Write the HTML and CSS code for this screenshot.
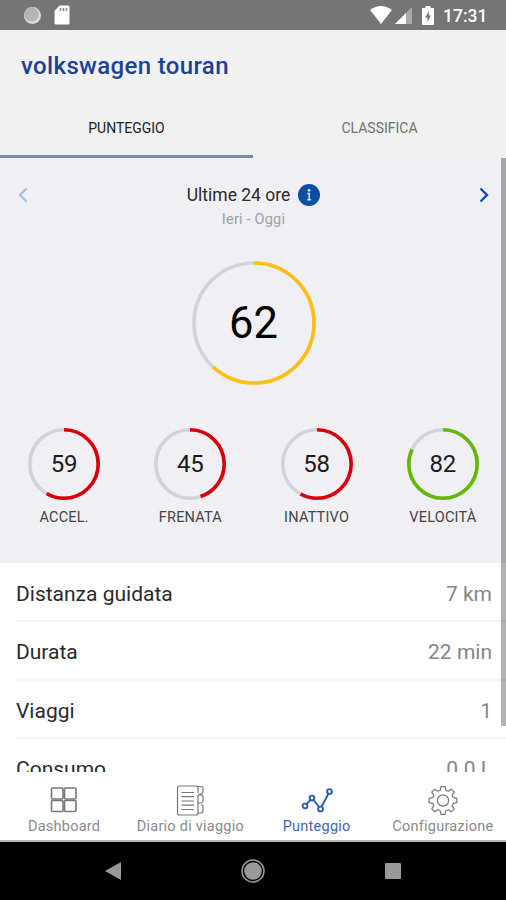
FILE: index.html
```
<!DOCTYPE html>
<html lang="it">
<head>
  <meta charset="UTF-8" />
  <meta name="viewport" content="width=device-width, initial-scale=1.0"/>
  <title>Punteggio</title>
  <link rel="stylesheet" href="styles.css">
</head>
<body>
  <div class="status-bar">
    <div class="status-left">
      <svg width="20" height="20" viewBox="0 0 20 20"><circle cx="10.500" cy="10.500" r="8.500" fill="#dcdcdc"/><circle cx="9.500" cy="9.300" r="7.200" fill="#b5b5b5"/></svg>
      <svg width="16" height="20" viewBox="0 0 16 20"><path d="M5.500 .5H14Q15.500 .5 15.500 2V18Q15.500 19.500 14 19.500H2Q.5 19.500 .5 18V6Z" fill="#fff"/><path d="M6.500 3v3M9.500 3v3M12.500 3v3" stroke="#888" stroke-width="1.500"/></svg>
    </div>
    <div class="status-right">
      <svg class="wifi" width="22" height="18" viewBox="0 0 22 18"><path d="M0 4Q11-4 22 4L11 18Z" fill="#fff"/></svg>
      <svg class="signal" width="17" height="17" viewBox="0 0 17 17"><path d="M17 0V17H0Z" fill="#a9a9a9"/><path d="M11 6V17H0Z" fill="#fff"/></svg>
      <svg class="battery" width="12" height="19" viewBox="0 0 12 19"><path d="M3.500 0H8.500V2H11Q12 2 12 3V18Q12 19 11 19H1Q0 19 0 18V3Q0 2 1 2H3.500Z" fill="#fff"/><path d="M7 5L3 11.500H5.500V16L9 9.500H6.800Z" fill="#757575"/></svg>
      <span class="clock">17:31</span>
    </div>
  </div>

  <header>
    <h1>volkswagen touran</h1>
    <nav class="tabs">
      <a class="tab active">PUNTEGGIO</a>
      <a class="tab">CLASSIFICA</a>
    </nav>
  </header>

  <main>
    <section class="score">
      <div class="period">
        <svg class="prev" width="10" height="16" viewBox="0 0 10 16"><path d="M8.500 1.500L2 8L8.500 14.500"/></svg>
        <div class="period-text">
          <div class="period-title">
            <span>Ultime 24 ore</span>
            <svg width="22" height="22" viewBox="0 0 22 22"><circle cx="11" cy="11" r="11" fill="#0b4ea2"/><circle cx="11" cy="6.300" r="1.400" fill="#dbe6f5"/><path d="M9.300 9.500H11.200V15.500M9.200 15.700H13" fill="none" stroke="#dbe6f5" stroke-width="1.500"/></svg>
          </div>
          <p>Ieri - Oggi</p>
        </div>
        <svg class="next" width="10" height="16" viewBox="0 0 10 16"><path d="M1.500 1.500L8 8L1.500 14.500"/></svg>
      </div>

      <div class="gauge big yellow">
        <svg viewBox="0 0 124 124"><circle class="track" cx="62" cy="62" r="60"/><circle class="value" cx="62" cy="62" r="60" pathLength="100" stroke-dasharray="62 100"/></svg>
        <span>62</span>
      </div>

      <div class="gauges">
        <div class="item">
          <div class="gauge red">
            <svg viewBox="0 0 72 72"><circle class="track" cx="36" cy="36" r="34.200"/><circle class="value" cx="36" cy="36" r="34.200" pathLength="100" stroke-dasharray="58.500 100"/></svg>
            <span>59</span>
          </div>
          <p>ACCEL.</p>
        </div>
        <div class="item">
          <div class="gauge red">
            <svg viewBox="0 0 72 72"><circle class="track" cx="36" cy="36" r="34.200"/><circle class="value" cx="36" cy="36" r="34.200" pathLength="100" stroke-dasharray="45 100"/></svg>
            <span>45</span>
          </div>
          <p>FRENATA</p>
        </div>
        <div class="item">
          <div class="gauge red">
            <svg viewBox="0 0 72 72"><circle class="track" cx="36" cy="36" r="34.200"/><circle class="value" cx="36" cy="36" r="34.200" pathLength="100" stroke-dasharray="58 100"/></svg>
            <span>58</span>
          </div>
          <p>INATTIVO</p>
        </div>
        <div class="item">
          <div class="gauge green">
            <svg viewBox="0 0 72 72"><circle class="track" cx="36" cy="36" r="34.200"/><circle class="value" cx="36" cy="36" r="34.200" pathLength="100" stroke-dasharray="82 100"/></svg>
            <span>82</span>
          </div>
          <p>VELOCITÀ</p>
        </div>
      </div>
    </section>

    <ul class="stats">
      <li><span>Distanza guidata</span><b>7 km</b></li>
      <li><span>Durata</span><b>22 min</b></li>
      <li><span>Viaggi</span><b>1</b></li>
      <li><span>Consumo</span><b>0.0 L</b></li>
    </ul>
    <div class="scrollbar"></div>
  </main>

  <nav class="bottom-nav">
    <a>
      <svg width="32" height="32" viewBox="0 0 32 32"><rect x="3.500" y="4" width="11.500" height="11" rx="1"/><rect x="16.500" y="4" width="11.500" height="11" rx="1"/><rect x="3.500" y="16.500" width="11.500" height="11" rx="1"/><rect x="16.500" y="16.500" width="11.500" height="11" rx="1"/></svg>
      <span>Dashboard</span>
    </a>
    <a>
      <svg class="thin" width="32" height="32" viewBox="0 0 32 32"><path d="M24 9V4Q24 2 22 2H5Q3.500 2 3.500 3.500V29Q3.500 31 5.500 31H22Q24 31 24 29V12Q24 10 26 10H28L29 8V4.500Q29 2.500 27 2.500H22M24 11H27Q29 11 29 13V17L27.500 19H24M27.500 20.500L29 22V27Q29 29 27 29H24M7.500 8.500H20M7.500 12.700H20M7.500 17H20M7.500 21.200H20M7.500 25.500H20"/></svg>
      <span>Diario di viaggio</span>
    </a>
    <a class="active">
      <svg width="32" height="32" viewBox="0 0 32 32"><circle cx="4" cy="22" r="2.400"/><circle cx="11" cy="14" r="2.400"/><circle cx="19.500" cy="25" r="2.400"/><circle cx="28.500" cy="7.500" r="2.400"/><path d="M5.600 20.200L9.400 15.800M12.500 16L18 23M20.600 22.800L27.400 9.700"/></svg>
      <span>Punteggio</span>
    </a>
    <a>
      <svg class="thin" width="32" height="32" viewBox="0 0 32 32"><circle cx="16" cy="16.500" r="5.600"/><path d="M13.900 2.600H18.100L18.800 6.200L21.300 7.300L24.300 5.200L27.300 8.200L25.200 11.200L26.300 13.700L29.900 14.400V18.600L26.300 19.300L25.200 21.800L27.300 24.800L24.300 27.800L21.300 25.700L18.800 26.800L18.100 30.400H13.900L13.200 26.800L10.700 25.700L7.700 27.800L4.700 24.800L6.800 21.800L5.700 19.300L2.100 18.600V14.400L5.700 13.700L6.800 11.200L4.700 8.200L7.700 5.200L10.700 7.300L13.200 6.200Z" stroke-linejoin="round"/></svg>
      <span>Configurazione</span>
    </a>
  </nav>

  <div class="system-nav">
    <svg width="16" height="18" viewBox="0 0 16 18"><path d="M16 0V18L0 9Z" fill="#999"/></svg>
    <svg width="24" height="24" viewBox="0 0 24 24"><circle cx="12" cy="12" r="11" fill="none" stroke="#999" stroke-width="1.500"/><circle cx="12" cy="12" r="8.800" fill="#999"/></svg>
    <svg width="16" height="16" viewBox="0 0 16 16"><rect width="16" height="16" rx="1" fill="#999"/></svg>
  </div>
</body>
</html>
```
FILE: styles.css
```
:root {
  --blue: #1a4296;
  --panel: #efeff4;
  --grey: #8a8a8a;
}

* {
  margin: 0;
  padding: 0;
  box-sizing: border-box;
}

body {
  width: 506px;
  height: 900px;
  display: flex;
  flex-direction: column;
  overflow: hidden;
  background: #fff;
  color: #2a2a2a;
  font-family: Roboto, sans-serif;
}

.status-bar {
  height: 30px;
  background: #757575;
  display: flex;
  justify-content: space-between;
  padding: 0 20px 0 22px;
}

.status-left, .status-right {
  display: flex;
  align-items: center;
}

.status-left {
  gap: 12px;
}

.signal {
  margin: 0 10px 0 3px;
}

.clock {
  width: 43px;
  margin-left: 9px;
  padding-top: 1px;
  color: #fff;
  font-size: 17.5px;
  font-weight: 500;
  white-space: nowrap;
}

header {
  height: 128px;
  background: #f1f1f1;
}

h1 {
  height: 70px;
  padding-left: 21px;
  line-height: 72px;
  color: var(--blue);
  font-size: 24px;
  font-weight: 500;
  letter-spacing: 0.35px;
}

.tabs {
  display: flex;
  height: 58px;
}

.tab {
  flex: 1;
  border-bottom: 3px solid transparent;
  text-align: center;
  line-height: 57px;
  font-size: 14px;
  color: #707070;
}

.tab.active {
  color: #222;
  border-color: #7986b8;
}

main {
  position: relative;
  height: 614px;
  overflow: hidden;
}

.score {
  height: 405px;
  background: var(--panel);
  display: flex;
  flex-direction: column;
  align-items: center;
}

.period {
  width: 100%;
  height: 103px;
  padding: 26px 17px 0 18px;
  display: flex;
  justify-content: space-between;
}

.prev, .next {
  margin-top: 3px;
  fill: none;
  stroke: #a8c1df;
  stroke-width: 2.4;
}

.next {
  stroke: #0b4ea2;
}

.period-title {
  display: flex;
  align-items: center;
  gap: 8px;
  height: 22px;
  font-size: 17.5px;
}

.period-text p {
  margin-top: 4px;
  text-align: center;
  font-size: 14.5px;
  line-height: 19px;
  letter-spacing: 0.2px;
  color: #a0a0a4;
}

.gauge {
  width: 72px;
  height: 72px;
  display: grid;
  place-items: center;
  font-size: 24px;
  color: #1a1a1a;
}

.gauge.big {
  width: 124px;
  height: 124px;
  margin-left: 1px;
  font-size: 43.5px;
  color: #000;
}

.gauge svg, .gauge span {
  grid-area: 1 / 1;
}

.gauge svg {
  width: 100%;
  height: 100%;
  transform: rotate(-90deg);
}

.track, .value {
  fill: none;
  stroke-width: 3.6;
}

.track { stroke: #d0d3da; }
.yellow .value { stroke: #fdc010; }
.red .value { stroke: #d90009; }
.green .value { stroke: #62b900; }

.gauges {
  width: 100%;
  padding-left: 1px;
  display: grid;
  grid-template-columns: repeat(4, 1fr);
  margin-top: 43px;
}

.item {
  display: flex;
  flex-direction: column;
  align-items: center;
}

.item p {
  margin-top: 9px;
  line-height: 18px;
  font-size: 14.5px;
  letter-spacing: 0.2px;
  color: #444;
}

.stats {
  list-style: none;
  padding: 1px 0 0 16px;
}

.stats li {
  height: 58.3px;
  padding: 4px 14px 0 0;
  display: flex;
  justify-content: space-between;
  align-items: center;
  border-bottom: 2px solid #f4f4f4;
  font-size: 21px;
}

.stats b {
  font-weight: 400;
  color: #858585;
}

.scrollbar {
  position: absolute;
  top: 0;
  right: 0;
  width: 5px;
  height: 568px;
  background: rgba(0, 0, 0, 0.3);
}

.bottom-nav {
  height: 70px;
  padding-left: 1px;
  display: grid;
  grid-template-columns: repeat(4, 1fr);
  border-bottom: 2px solid #b5b5b5;
}

.bottom-nav a {
  display: flex;
  flex-direction: column;
  align-items: center;
  padding-top: 12px;
  font-size: 14.5px;
  line-height: 22px;
  letter-spacing: 0.25px;
  white-space: nowrap;
  color: var(--grey);
}

.bottom-nav svg {
  fill: none;
  stroke: #777;
  stroke-width: 1.6;
}

.bottom-nav svg.thin {
  stroke-width: 1.2;
}

.bottom-nav a.active {
  color: #3f66b2;
}

.bottom-nav a.active svg {
  stroke: #275bad;
  stroke-width: 1.9;
}

.system-nav {
  height: 58px;
  background: #000;
  display: flex;
  justify-content: center;
  align-items: center;
  gap: 120px;
}
```
